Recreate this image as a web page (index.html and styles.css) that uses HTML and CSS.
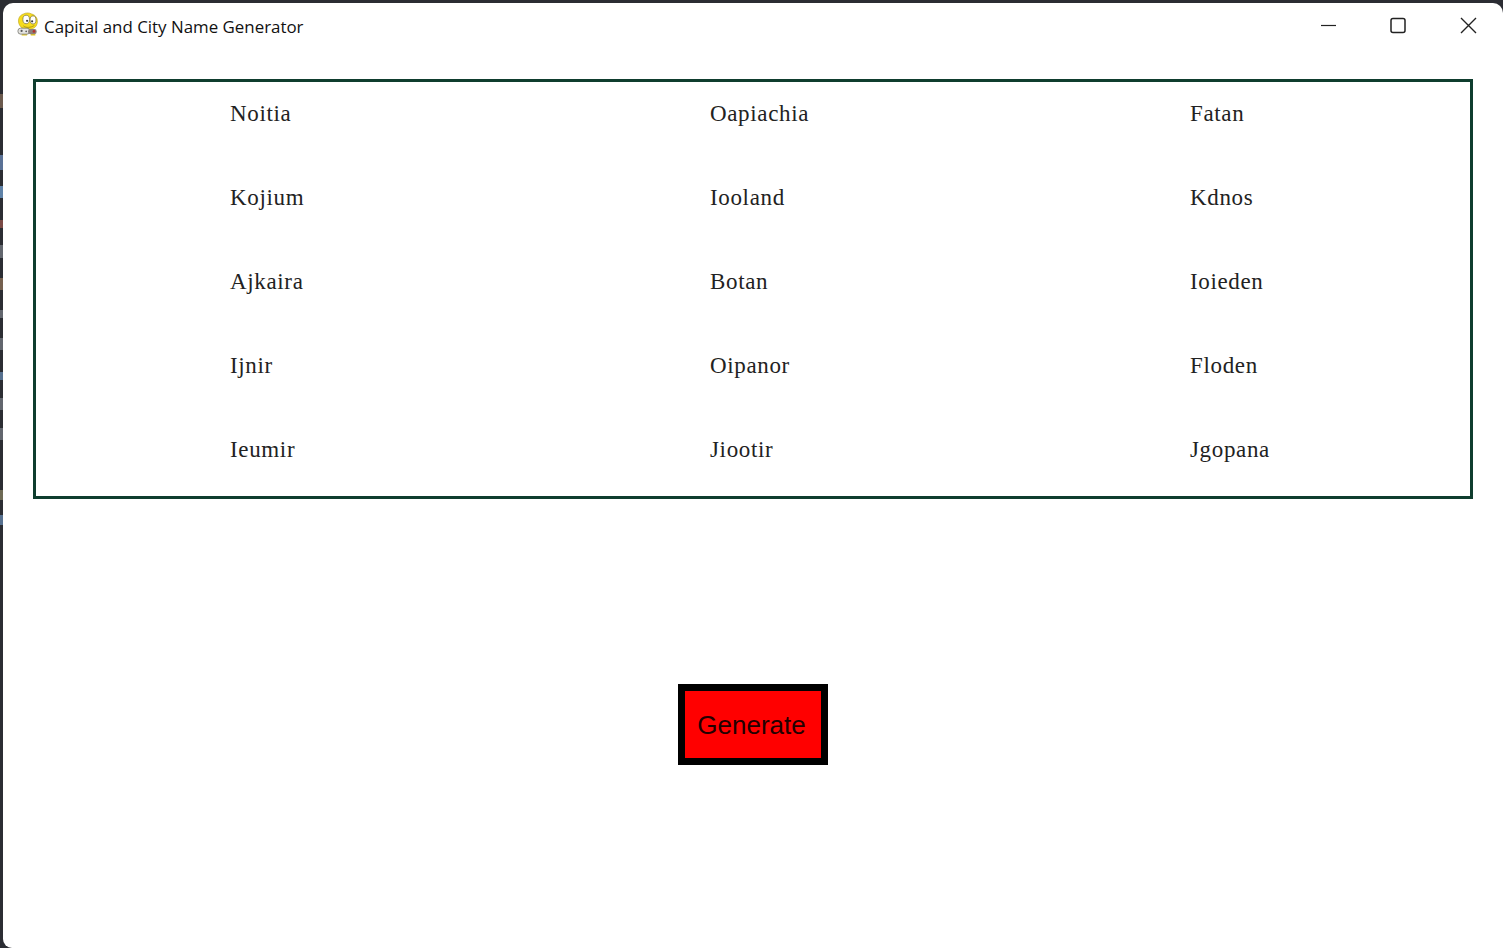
FILE: index.html
```html
<!DOCTYPE html>
<html lang="en">
<head>
  <meta charset="UTF-8" />
  <title>Capital and City Name Generator</title>
  <link rel="stylesheet" href="styles.css">
</head>
<body>
  <div class="window">
    <div class="titlebar">
      <svg class="app-icon" width="22" height="25" viewBox="0 0 24 26">
        <path d="M6 21 L5 25 L11 25 L11 21 Z M15 21 L15 25 L20 25 L20 21 Z" fill="#e6c81a" />
        <path d="M3 14 C0 9 2 3 7 1.5 C10 0 13 0 16 1.5 C21 3 23 7 22 12 C21 16 18 18 13 18.5 C8 19 5 17 3 14 Z" fill="#f6dc1e" stroke="#b59c12" stroke-width="0.6" />
        <ellipse cx="10" cy="7.5" rx="3.6" ry="4.6" fill="#fff" stroke="#77704a" stroke-width="0.8" />
        <ellipse cx="17.5" cy="8" rx="3.2" ry="4.4" fill="#fff" stroke="#77704a" stroke-width="0.8" />
        <circle cx="11" cy="9" r="1.2" fill="#3a3a3a" />
        <circle cx="16.5" cy="9.5" r="1.2" fill="#3a3a3a" />
        <path d="M7 14.5 C10 17 15 16.5 19 14" fill="none" stroke="#9a840e" stroke-width="0.8" />
        <rect x="1" y="17" width="13" height="6.5" rx="3" fill="#e4e4e0" stroke="#6f6f6a" stroke-width="0.8" />
        <rect x="12" y="18" width="9.5" height="5.5" rx="2.5" fill="#8d817c" />
        <circle cx="18.5" cy="20.5" r="1.5" fill="#b4332e" />
        <circle cx="5" cy="20" r="1.2" fill="#555" />
        <circle cx="10" cy="20.5" r="0.9" fill="#555" />
      </svg>
      <span class="title">Capital and City Name Generator</span>
      <div class="controls">
        <svg class="ctl" width="70" height="24" viewBox="0 0 70 24"><path d="M28 12.5 H43" stroke="#222" stroke-width="1.2" /></svg>
        <svg class="ctl" width="70" height="24" viewBox="0 0 70 24"><rect x="28" y="5.5" width="14" height="14" rx="2" fill="none" stroke="#222" stroke-width="1.5" /></svg>
        <svg class="ctl" width="70" height="24" viewBox="0 0 70 24"><path d="M28 5 L43 20 M43 5 L28 20" stroke="#222" stroke-width="1.4" /></svg>
      </div>
    </div>

    <div class="names">
      <div>Noitia</div><div>Oapiachia</div><div>Fatan</div>
      <div>Kojium</div><div>Iooland</div><div>Kdnos</div>
      <div>Ajkaira</div><div>Botan</div><div>Ioieden</div>
      <div>Ijnir</div><div>Oipanor</div><div>Floden</div>
      <div>Ieumir</div><div>Jiootir</div><div>Jgopana</div>
    </div>

    <div class="actions">
      <button class="generate">Generate</button>
    </div>
  </div>
</body>
</html>
```

FILE: styles.css
```css
html, body {
  margin: 0;
  height: 100%;
  overflow: hidden;
}
/* the desktop behind the window shows as a thin strip with bits of other text */
body {
  background-color: #2b2d33;
  background-image: linear-gradient(to bottom,
    #2b2d33 94px, #6b5a4e 94px, #6b5a4e 108px, #2b2d33 108px,
    #2b2d33 155px, #5a7196 155px, #5a7196 170px, #2b2d33 170px,
    #2b2d33 186px, #5f82a8 186px, #5f82a8 198px, #2b2d33 198px,
    #2b2d33 220px, #7a4a46 220px, #7a4a46 228px, #2b2d33 228px,
    #2b2d33 245px, #62666e 245px, #62666e 258px, #2b2d33 258px,
    #2b2d33 278px, #75604f 278px, #75604f 290px, #2b2d33 290px,
    #2b2d33 310px, #62666e 310px, #62666e 318px, #2b2d33 318px,
    #2b2d33 338px, #62666e 338px, #62666e 350px, #2b2d33 350px,
    #2b2d33 372px, #56708f 372px, #56708f 380px, #2b2d33 380px,
    #2b2d33 398px, #62666e 398px, #62666e 410px, #2b2d33 410px,
    #2b2d33 428px, #62666e 428px, #62666e 440px, #2b2d33 440px,
    #2b2d33 490px, #6e6a55 490px, #6e6a55 500px, #2b2d33 500px,
    #2b2d33 515px, #56708f 515px, #56708f 525px, #2b2d33 525px);
  padding: 3px 0 0 3px;
  box-sizing: border-box;
}
.window {
  height: 100%;
  background-color: #fff;
  border-radius: 10px 10px 0 9px;
  display: flex;
  flex-direction: column;
}
.titlebar {
  height: 47px;
  display: flex;
  align-items: center;
  padding-left: 14px;
  font-family: "Open Sans", sans-serif;
  font-size: 16.9px;
  color: #111;
}
.app-icon {
  margin-right: 5px;
  margin-top: -4px;
}
.title {
  flex: 1;
}
.controls {
  display: flex;
  margin-top: -3px;
}
.ctl {
  display: block;
}
.names {
  margin: 29px 30px 0 30px;
  height: 414px;
  border: 3px solid #0f3d2e;
  padding-left: 194px;
  display: grid;
  grid-template-columns: 480px 480px 1fr;
  grid-auto-rows: 84px;
  font-family: "Liberation Serif", serif;
  font-size: 23px;
  letter-spacing: 0.65px;
  color: #222;
  line-height: 64px;
}
.actions {
  display: flex;
  justify-content: center;
  padding-top: 185px;
}
.generate {
  width: 150px;
  height: 81px;
  padding: 2px 3px 0 0;
  border: 7px solid #000;
  border-radius: 0;
  background-color: #f00;
  font-family: "Liberation Sans", sans-serif;
  font-size: 26px;
  color: #200;
}
```
